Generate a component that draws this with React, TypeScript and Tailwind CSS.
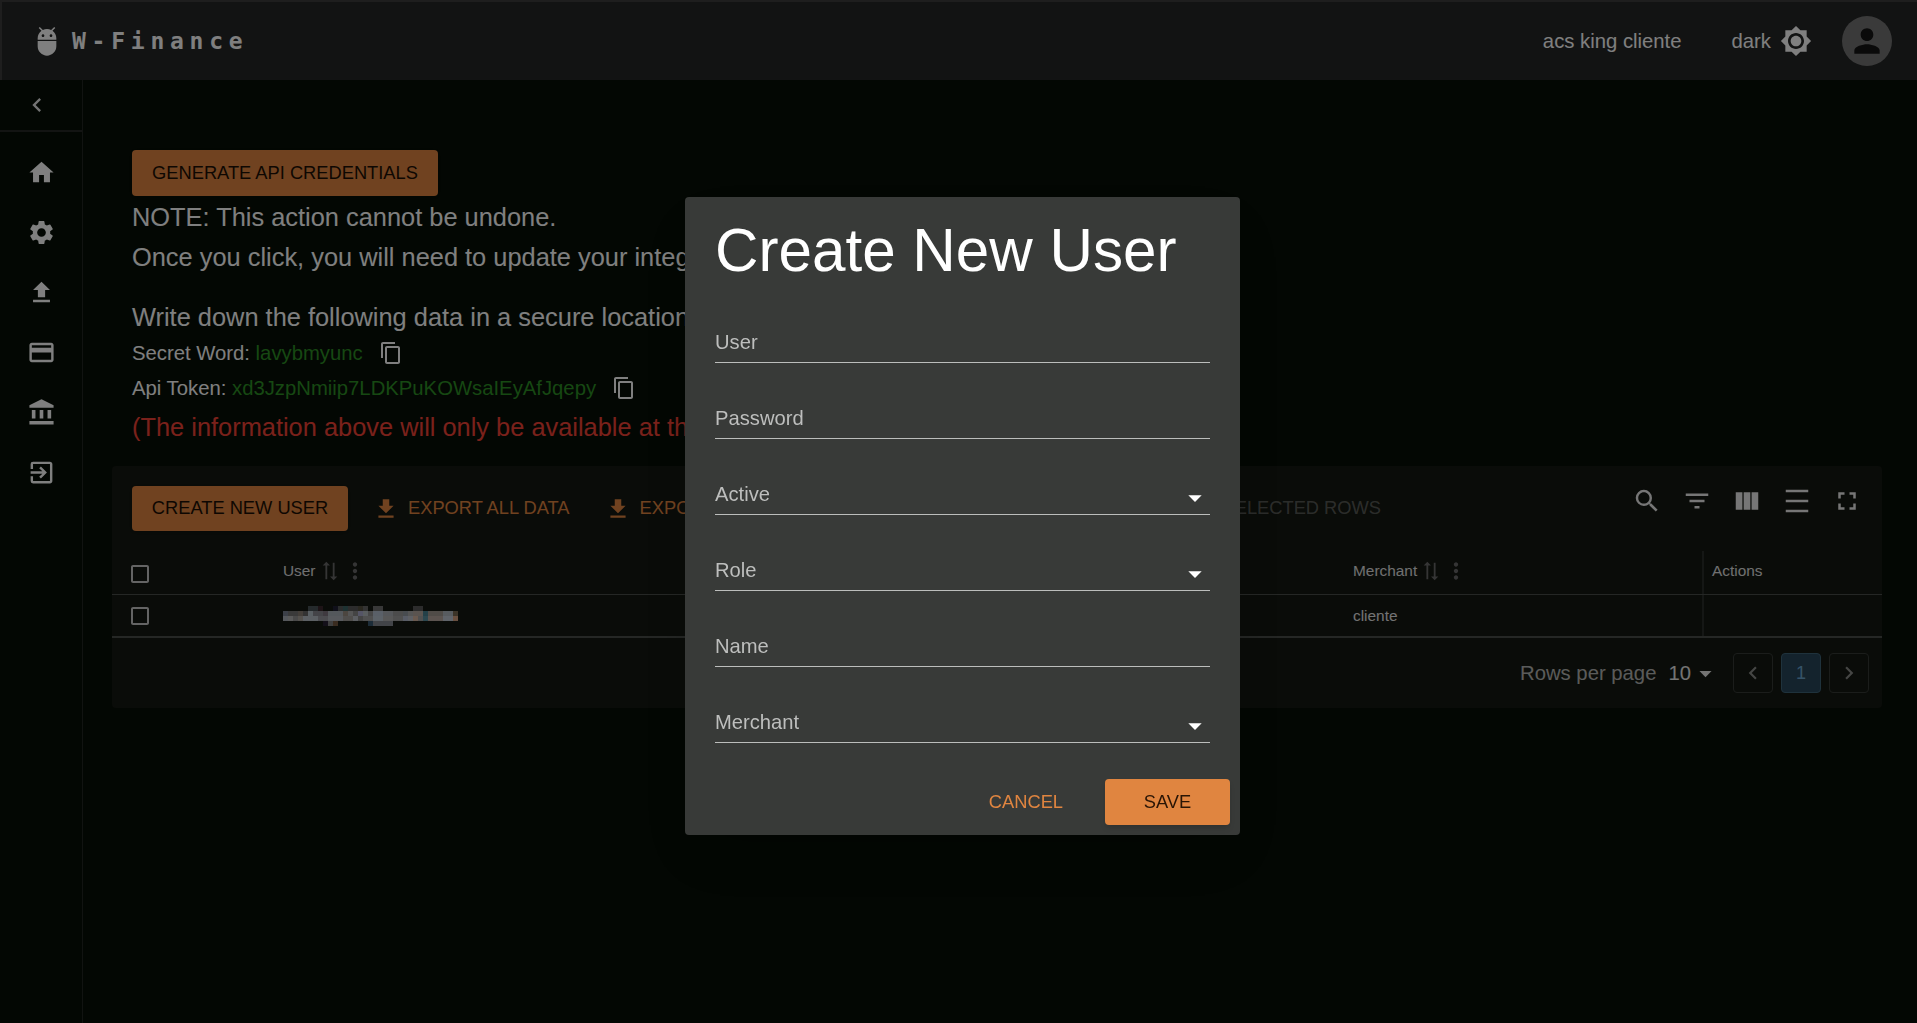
import React from "react";
import {
  MdAdb, MdBrightness7, MdPerson, MdChevronLeft, MdChevronRight, MdHome, MdSettings, MdFileUpload, MdCreditCard,
  MdAccountBalance, MdExitToApp, MdContentCopy, MdFileDownload, MdSearch, MdFilterList, MdViewColumn, MdDensityMedium,
  MdFullscreen, MdMoreVert, MdSyncAlt, MdCheckBoxOutlineBlank, MdArrowDropDown,
} from "react-icons/md";

const sans = { fontFamily: '"Liberation Sans", Arial, sans-serif' };

const navIcons = [MdHome, MdSettings, MdFileUpload, MdCreditCard, MdAccountBalance, MdExitToApp];
const tools = [MdSearch, MdFilterList, MdViewColumn, MdDensityMedium, MdFullscreen];

const mosaicRows: [number, number, string][][] = [
  [[97, 127, "#252a2c"], [127, 142, "#1e1417"], [172, 187, "#10101a"], [187, 202, "#2a2c2c"], [202, 217, "#1e3232"], [217, 247, "#2c2c2c"], [247, 262, "#2a2820"], [262, 277, "#333333"], [292, 322, "#383838"], [412, 442, "#2c2c2c"]],
  [[22, 37, "#3c4048"], [37, 67, "#3a3a3a"], [67, 82, "#443f3a"], [82, 97, "#333333"], [97, 112, "#5a6064"], [112, 142, "#444448"], [142, 157, "#3f3a40"], [157, 202, "#54585c"], [202, 217, "#4c4640"], [217, 232, "#555555"], [232, 247, "#444444"], [247, 262, "#555566"], [262, 277, "#5a5e60"], [277, 292, "#484848"], [292, 322, "#5a6068"], [322, 352, "#55575a"], [352, 382, "#4c4c4c"], [382, 397, "#484c50"], [397, 412, "#555555"], [412, 442, "#5a5450"], [442, 457, "#244048"], [457, 502, "#504c48"], [502, 532, "#585c60"], [532, 547, "#3c3428"]],
  [[22, 37, "#55585c"], [37, 52, "#5a5a5a"], [52, 67, "#4a4a4a"], [67, 82, "#55524e"], [82, 127, "#5c6064"], [127, 157, "#4c4c50"], [157, 202, "#585a5e"], [202, 232, "#504e4c"], [232, 247, "#5c5e62"], [247, 262, "#444444"], [262, 292, "#505050"], [292, 322, "#5c6268"], [322, 352, "#585858"], [352, 382, "#505050"], [382, 397, "#585c66"], [397, 412, "#5e6064"], [412, 427, "#6a5a50"], [427, 442, "#505050"], [442, 457, "#2c4850"], [457, 502, "#5c5450"], [502, 532, "#60646a"], [532, 547, "#6a5040"]],
  [[142, 157, "#14101a"], [157, 172, "#404040"], [172, 187, "#3a2c20"], [277, 292, "#1c2c38"], [292, 352, "#424448"]],
];

function Check() {
  return <MdCheckBoxOutlineBlank size={24} className="text-[#c8c8c8]" />;
}

function HeaderCell({ label }: { label: string }) {
  return (
    <div className="flex items-center text-[15.4px] text-[#e0e0e0]">
      <span>{label}</span>
      <MdSyncAlt size={22} className="ml-[3px] rotate-90 text-[#6a6a6a]" />
      <MdMoreVert size={26} className="ml-[1px] text-[#6a6a6a]" />
    </div>
  );
}

function Field({ label, select }: { label: string; select?: boolean }) {
  return (
    <div className="mt-[44px] flex h-[32px] items-center justify-between border-b border-[#bcbdbc] text-[20.2px] leading-none text-[#bdbebd] first:mt-0">
      <span className="-mt-[8px]">{label}</span>
      {select && <MdArrowDropDown size={32} className="-mr-[1px] -mt-[1px] text-white" />}
    </div>
  );
}

export default function App() {
  return (
    <div className="relative flex h-[1023px] w-[1917px] flex-col overflow-hidden bg-[#060e06] text-white" style={sans}>
      <header className="flex h-20 shrink-0 items-center border-t-2 border-l-2 border-[#3c3c3c] bg-[#242626] pl-[29px] pr-[25px]">
        <MdAdb size={32} className="text-white" />
        <span className="ml-[9px] text-[23px] font-bold tracking-[5.75px] text-white" style={{ fontFamily: '"DejaVu Sans Mono", monospace' }}>W-Finance</span>
        <span className="ml-auto text-[20.3px] text-white">acs king cliente</span>
        <span className="ml-[50px] text-[20.3px] text-white">dark</span>
        <MdBrightness7 size={32} className="ml-[9px] text-white" />
        <span className="ml-[30px] flex h-[50px] w-[50px] items-center justify-center rounded-full bg-[#757575]">
          <MdPerson size={38} className="text-[#141414]" />
        </span>
      </header>
      <div className="flex min-h-0 flex-1">
        <aside className="flex w-[83px] shrink-0 flex-col border-r border-[#222622]">
          <div className="flex h-[52px] items-center justify-center border-b-2 border-[#262826] pr-[9px]">
            <MdChevronLeft size={28} className="text-white/90" />
          </div>
          <nav className="mt-[10px] flex flex-col items-center pl-[1px]">
            {navIcons.map((Icon, i) => (
              <span key={i} className="flex h-[60px] items-center justify-center">
                <Icon size={29} className="text-white" />
              </span>
            ))}
          </nav>
        </aside>
        <main className="min-w-0 flex-1 pl-[29px] pr-[35px] pt-[70px]">
          <div className="pl-[20px]">
            <button className="flex h-[46px] w-[306px] items-center justify-center rounded bg-[#e08540] text-[18.3px] text-[#1c0f04] shadow">GENERATE API CREDENTIALS</button>
            <p className="mt-[5px] text-[25.4px] leading-[32px] text-white">NOTE: This action cannot be undone.</p>
            <p className="mt-[8px] text-[25.4px] leading-[32px] text-white">Once you click, you will need to update your integration with the new data.</p>
            <p className="mt-[28px] text-[25.4px] leading-[32px] text-white">Write down the following data in a secure location, please.</p>
            <div className="mt-[6px] flex h-[28px] items-center text-[20.3px] text-white">
              <span>Secret Word:&nbsp;</span><span className="text-[#2d9025]">lavybmyunc</span>
              <MdContentCopy size={24} className="ml-[16px] text-white" />
            </div>
            <div className="mt-[7px] flex h-[28px] items-center text-[20.3px] text-white">
              <span>Api Token:&nbsp;</span><span className="text-[#2d9025]">xd3JzpNmiip7LDKPuKOWsaIEyAfJqepy</span>
              <MdContentCopy size={24} className="ml-[16px] text-white" />
            </div>
            <p className="mt-[9px] text-[25.4px] leading-[32px] text-[#f44336]">(The information above will only be available at this moment)</p>
          </div>
          <section className="mt-[23px] h-[242px] rounded bg-[#141812]">
            <div className="flex h-[85px] items-start pl-[20px] pr-[10px] pt-[20px]">
              <button className="flex h-[45px] w-[216px] items-center justify-center rounded bg-[#e08540] pb-[2px] text-[18.3px] text-[#1c0f04] shadow">CREATE NEW USER</button>
              <span className="ml-[25px] flex h-[45px] items-center text-[18.3px] text-[#e08540]"><MdFileDownload size={26} className="mr-[9px]" /><span className="-mt-[2px]">EXPORT ALL DATA</span></span>
              <span className="ml-[35px] flex h-[45px] items-center text-[18.3px] text-[#e08540]"><MdFileDownload size={26} className="mr-[9px]" /><span className="-mt-[2px]">EXPORT PAGE ROWS</span></span>
              <span className="ml-auto mr-[241px] flex h-[45px] items-center pb-[2px] text-[18.3px] text-white/30">EXPORT SELECTED ROWS</span>
              <div className="-mt-[10px] flex">
                {tools.map((Icon, i) => (
                  <span key={i} className="flex h-[50px] w-[50px] items-center justify-center"><Icon size={30} className="text-[#ececec]" /></span>
                ))}
              </div>
            </div>
            <div className="grid h-[44px] grid-cols-[171px_1070px_349px_1fr] border-b border-[#4a4e4a]">
              <div className="mt-[3px] flex items-center pl-[16px]"><Check /></div>
              <div className="-mt-[3px] flex items-center"><HeaderCell label="User" /></div>
              <div className="-mt-[3px] flex items-center"><HeaderCell label="Merchant" /></div>
              <div className="flex items-center border-l-2 border-[#2a2e2a] pl-[8px] text-[15.4px] text-[#e0e0e0]"><span className="-mt-[3px]">Actions</span></div>
            </div>
            <div className="grid h-[43px] grid-cols-[171px_1070px_349px_1fr] border-b-2 border-[#4a4e4a]">
              <div className="flex items-center pl-[16px]"><Check /></div>
              <div className="flex items-center">
                <svg width="175" height="20" viewBox="0 0 175 20" className="brightness-200">
                  {mosaicRows.map((row, r) =>
                    row.map(([a, b, c], i) => (
                      <rect key={`${r}-${i}`} x={(a - 22) / 3} y={r * 5} width={(b - a) / 3} height={5} fill={c} />
                    ))
                  )}
                </svg>
              </div>
              <div className="flex items-center text-[15.4px] text-[#e6e6e6]">cliente</div>
              <div className="border-l-2 border-[#2a2e2a]" />
            </div>
            <div className="flex h-[70px] items-center justify-end pr-[13px] text-[20.3px] text-white/70">
              <span>Rows per page</span>
              <span className="ml-[12px] text-white/90">10</span>
              <MdArrowDropDown size={29} className="text-white/90" />
              <div className="ml-[13px] flex gap-[8px]">
                <span className="flex h-[40px] w-[40px] items-center justify-center rounded border border-[#363a36]"><MdChevronLeft size={26} className="text-white/50" /></span>
                <span className="flex h-[40px] w-[40px] items-center justify-center rounded border border-[#3f6478] bg-[#28465a] text-[18px] text-[#6aa5cf]">1</span>
                <span className="flex h-[40px] w-[40px] items-center justify-center rounded border border-[#363a36]"><MdChevronRight size={26} className="text-white/50" /></span>
              </div>
            </div>
          </section>
        </main>
      </div>

      <div className="fixed inset-0 flex items-center justify-center bg-black/50 pl-[8px] pt-[9px]">
        <div className="flex h-[638px] w-[555px] flex-col rounded bg-[#383a38] shadow-2xl">
          <h2 className="ml-[30px] mt-[18px] text-[60.2px] leading-[72px] text-white">Create New User</h2>
          <div className="mt-[44px] px-[30px]">
            <Field label="User" />
            <Field label="Password" />
            <Field label="Active" select />
            <Field label="Role" select />
            <Field label="Name" />
            <Field label="Merchant" select />
          </div>
          <div className="mt-[36px] flex items-center justify-end pr-[10px]">
            <span className="mr-[42px] text-[18.3px] text-[#e08540]">CANCEL</span>
            <button className="flex h-[46px] w-[125px] items-center justify-center rounded bg-[#e08540] text-[18.3px] text-[#2a1505] shadow-md">SAVE</button>
          </div>
        </div>
      </div>
    </div>
  );
}
